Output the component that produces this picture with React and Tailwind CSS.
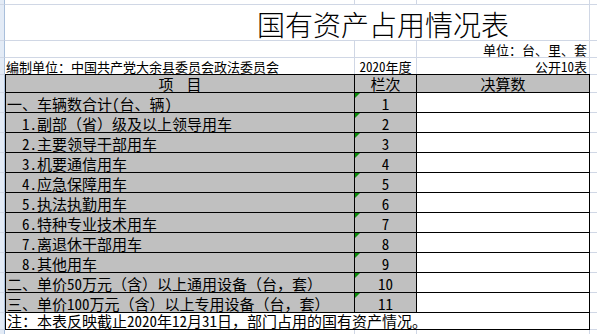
import React from 'react';

const rows = [
  { label: '一、车辆数合计(台、辆)', indent: false, n: '1' },
  { label: '1.副部（省）级及以上领导用车', indent: true, n: '2' },
  { label: '2.主要领导干部用车', indent: true, n: '3' },
  { label: '3.机要通信用车', indent: true, n: '4' },
  { label: '4.应急保障用车', indent: true, n: '5' },
  { label: '5.执法执勤用车', indent: true, n: '6' },
  { label: '6.特种专业技术用车', indent: true, n: '7' },
  { label: '7.离退休干部用车', indent: true, n: '8' },
  { label: '8.其他用车', indent: true, n: '9' },
  { label: '二、单价50万元（含）以上通用设备（台，套）', indent: false, n: '10' },
  { label: '三、单价100万元（含）以上专用设备（台，套）', indent: false, n: '11' },
];

function Strip({ className = '' }) {
  return <div className={'w-[5px] shrink-0 bg-[#e3ebf6] border-r border-r-[#a9bfdb] ' + className} />;
}

function Rest({ className = '' }) {
  return <div className={'flex-1 ' + className} />;
}

export default function App() {
  return (
    <div className="w-[597px] h-[334px] overflow-hidden bg-white flex flex-col text-black font-['Noto_Sans_Mono_CJK_SC','Noto_Sans_CJK_SC',sans-serif]">
      {/* partial row at top */}
      <div className="flex h-[5px] shrink-0">
        <Strip className="border-b border-b-[#d0d7e5]" />
        <div className="w-[350px] border-r border-b border-[#d0d7e5]" />
        <div className="w-[62px] border-r border-b border-[#d0d7e5]" />
        <div className="w-[173px] border-r border-b border-[#d0d7e5]" />
        <Rest className="border-b border-b-[#d0d7e5]" />
      </div>

      {/* title row */}
      <div className="flex h-[36px] shrink-0">
        <Strip className="border-b border-b-[#d0d7e5]" />
        <div className="w-[585px] border-r border-b border-[#d0d7e5] flex items-end pl-[252px] pb-[2px]">
          <span className="text-[28px] leading-[28px] font-light whitespace-nowrap font-['Noto_Sans_CJK_SC',sans-serif]">国有资产占用情况表</span>
        </div>
        <Rest className="border-b border-b-[#d0d7e5]" />
      </div>

      {/* units row */}
      <div className="flex h-[17px] shrink-0 text-[13px] leading-[13px]">
        <Strip className="border-b border-b-[#d0d7e5]" />
        <div className="w-[350px] border-r border-b border-[#d0d7e5]" />
        <div className="w-[62px] border-r border-b border-[#d0d7e5]" />
        <div className="w-[173px] border-r border-b border-[#d0d7e5] flex items-end justify-end pr-[2px] pb-[1px] whitespace-nowrap">单位：台、里、套</div>
        <Rest className="border-b border-b-[#d0d7e5]" />
      </div>

      {/* 编制单位 row */}
      <div className="flex h-[16px] shrink-0 text-[13px] leading-[13px]">
        <Strip />
        <div className="w-[350px] border-r border-[#d0d7e5] flex items-end pl-[1px] pb-[1px] whitespace-nowrap">编制单位：中国共产党大余县委员会政法委员会</div>
        <div className="w-[62px] border-r border-[#d0d7e5] flex items-end justify-center pb-[1px] whitespace-nowrap">2020年度</div>
        <div className="w-[173px] border-r border-[#d0d7e5] flex items-end justify-end pr-[2px] pb-[1px] whitespace-nowrap">公开10表</div>
        <Rest />
      </div>

      {/* header row */}
      <div className="flex h-[19px] shrink-0 text-[15px] leading-[15px]">
        <Strip className="border-y border-y-[#d0d7e5]" />
        <div className="w-[350px] bg-[#c0c0c0] border border-black flex items-end justify-center gap-[13px] pb-[1px]">
          <span>项</span>
          <span>目</span>
        </div>
        <div className="w-[62px] bg-[#c0c0c0] border-y border-r border-black flex items-end justify-center pb-[1px]">栏次</div>
        <div className="w-[173px] bg-[#c0c0c0] border-y border-r border-black flex items-end justify-center pb-[1px]">决算数</div>
        <Rest className="border-y border-y-[#d0d7e5]" />
      </div>

      {/* data rows */}
      {rows.map((r) => (
        <div key={r.n} className="flex h-[20px] shrink-0 text-[15px] leading-[15px]">
          <Strip className="border-b border-b-[#d0d7e5]" />
          <div className={'w-[350px] bg-[#c0c0c0] border-x border-b border-black flex items-end pb-[1px] whitespace-nowrap ' + (r.indent ? 'pl-[16px]' : 'pl-[1px]')}>
            {r.label}
          </div>
          <div className="relative w-[62px] bg-[#c0c0c0] border-r border-b border-black flex items-end justify-center pb-[1px]">
            <span className="absolute left-0 top-0 w-0 h-0 border-t-[5px] border-r-[5px] border-t-[#0b8a0b] border-r-transparent" />
            {r.n}
          </div>
          <div className="w-[173px] bg-white border-r border-b border-black" />
          <Rest className="border-b border-b-[#d0d7e5]" />
        </div>
      ))}

      {/* note row */}
      <div className="flex h-[17px] shrink-0 text-[15px] leading-[15px]">
        <Strip className="border-b border-b-[#d0d7e5]" />
        <div className="w-[585px] bg-white border-x border-b border-black flex items-end pl-[1px] pb-[1px] whitespace-nowrap">
          注：本表反映截止2020年12月31日，部门占用的国有资产情况。
        </div>
        <Rest className="border-b border-b-[#d0d7e5]" />
      </div>

      {/* bottom partial row */}
      <div className="flex flex-1">
        <Strip />
        <div className="w-[350px] border-r border-[#d0d7e5]" />
        <div className="w-[62px] border-r border-[#d0d7e5]" />
        <div className="w-[173px] border-r border-[#d0d7e5]" />
        <Rest />
      </div>
    </div>
  );
}
